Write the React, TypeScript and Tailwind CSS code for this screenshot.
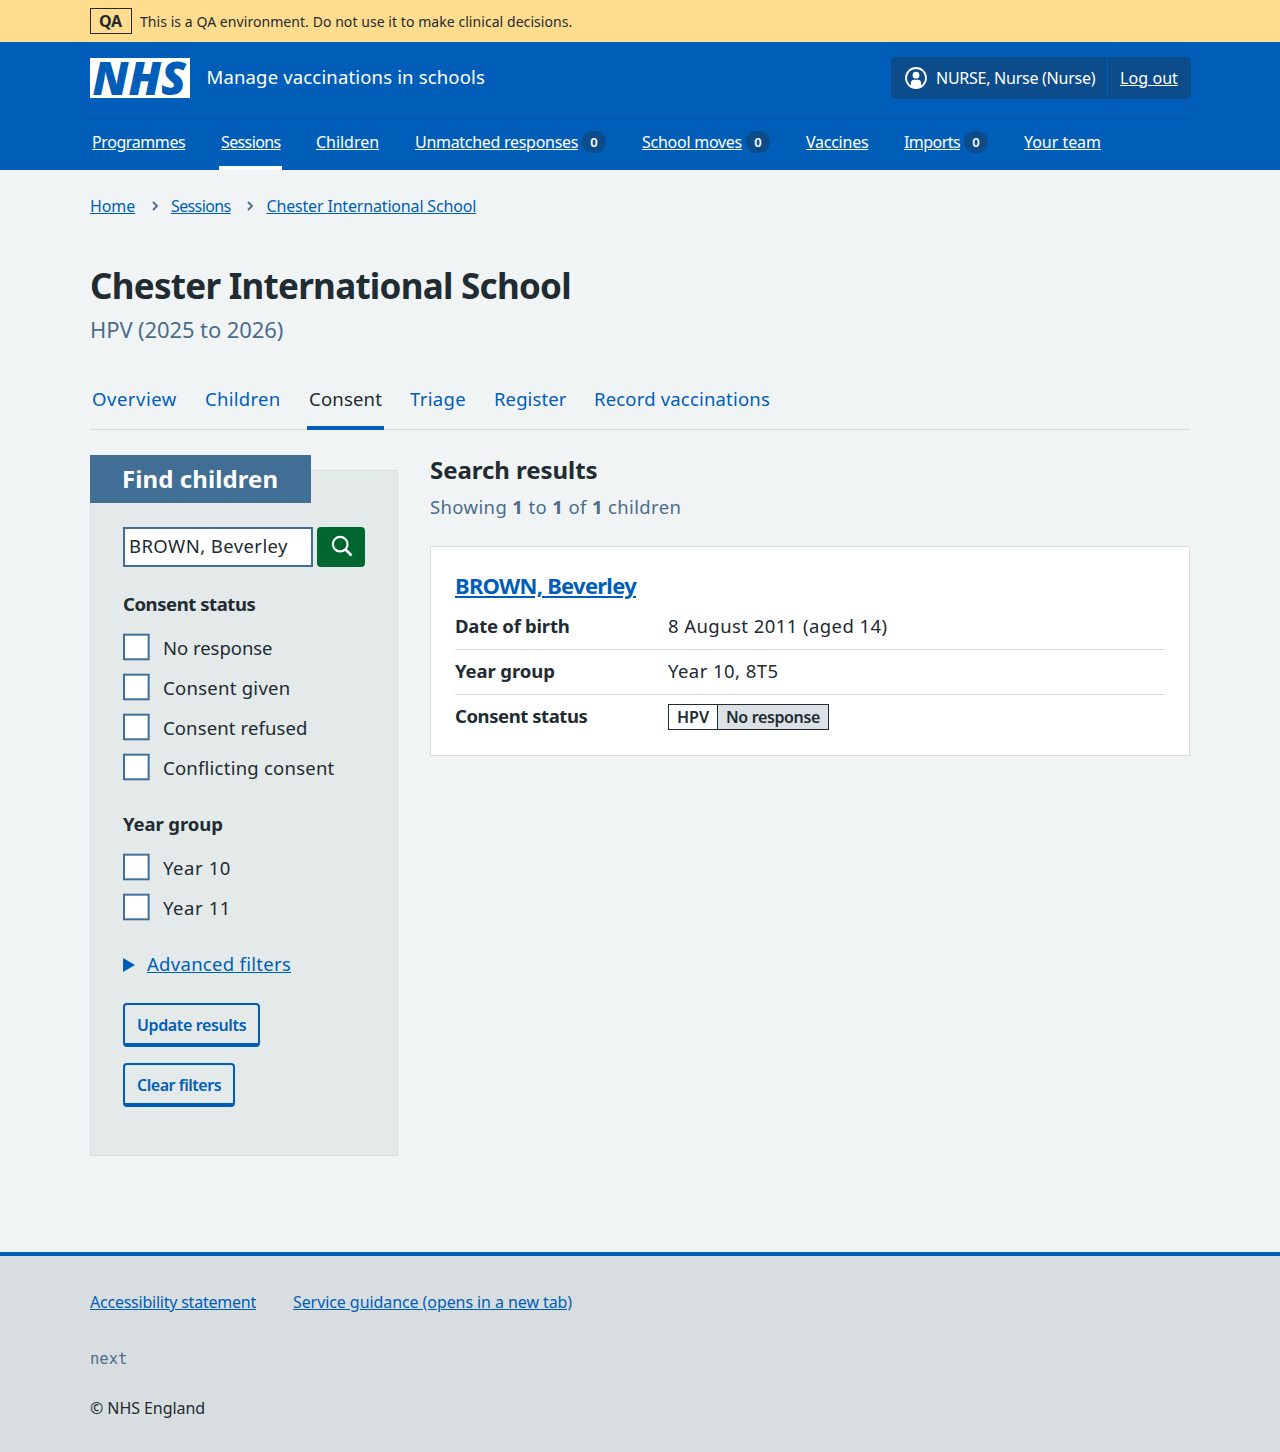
import type { ReactNode } from 'react';

type NavItem = { label: string; tracking: string; width: string; count?: number; current?: boolean };

const NAV: NavItem[] = [
  { label: 'Programmes', tracking: 'tracking-[-0.41px]', width: 'w-[97px]' },
  { label: 'Sessions', tracking: 'tracking-[-0.62px]', width: 'w-[63px]', current: true },
  { label: 'Children', tracking: 'tracking-[-0.04px]', width: 'w-[67px]' },
  { label: 'Unmatched responses', tracking: 'tracking-[-0.29px]', width: 'w-[195px]', count: 0 },
  { label: 'School moves', tracking: 'tracking-[-0.26px]', width: 'w-[132px]', count: 0 },
  { label: 'Vaccines', tracking: 'tracking-[-0.25px]', width: 'w-[66px]' },
  { label: 'Imports', tracking: 'tracking-[-0.56px]', width: 'w-[88px]', count: 0 },
  { label: 'Your team', tracking: 'tracking-[-0.04px]', width: 'w-[81px]' },
];

const TABS = [
  { label: 'Overview', tracking: 'tracking-[0.53px]', width: 'w-[89px]' },
  { label: 'Children', tracking: 'tracking-[0.29px]', width: 'w-[80px]' },
  { label: 'Consent', tracking: 'tracking-[0.19px]', width: 'w-[77px]', current: true },
  { label: 'Triage', tracking: 'tracking-[0.34px]', width: 'w-[60px]' },
  { label: 'Register', tracking: 'tracking-[0.1px]', width: 'w-[76px]' },
  { label: 'Record vaccinations', tracking: 'tracking-[0.18px]', width: 'w-[180px]' },
];

const CONSENT_OPTIONS = [
  { label: 'No response', tracking: 'tracking-[-0.04px]' },
  { label: 'Consent given', tracking: 'tracking-[0.27px]' },
  { label: 'Consent refused', tracking: 'tracking-[0.12px]' },
  { label: 'Conflicting consent', tracking: 'tracking-[0.23px]' },
];

const YEAR_OPTIONS = [
  { label: 'Year 10', tracking: 'tracking-[0.57px]' },
  { label: 'Year 11', tracking: 'tracking-[0.57px]' },
];

function Container({ children, className = '' }: { children: ReactNode; className?: string }) {
  return <div className={`mx-auto w-[1100px] ${className}`}>{children}</div>;
}

function Checkbox({ label, tracking }: { label: string; tracking: string }) {
  return (
    <label className="flex h-10 items-center">
      <span className="size-10 shrink-0 origin-left scale-[0.6667] border-3 border-[#406e95] bg-white" />
      <span className={`pt-px text-[18.5px] leading-6 ${tracking}`}>{label}</span>
    </label>
  );
}

function Chevron() {
  return (
    <svg className="h-[10px] w-[7px]" viewBox="0 0 7 10" fill="none" stroke="#4c6c8a" strokeWidth="1.8">
      <path d="M1 1 L5 5 L1 9" />
    </svg>
  );
}

function SummaryRow({ term, tracking, last, children }: { term: string; tracking: string; last?: boolean; children: ReactNode }) {
  return (
    <div className={`flex h-[45px] items-start pt-[9px] ${last ? '' : 'border-b border-[#d8dde0]'}`}>
      <dt className={`w-[213px] text-[18.5px] leading-6 font-bold ${tracking}`}>{term}</dt>
      <dd className="flex">{children}</dd>
    </div>
  );
}

export default function App() {
  return (
    <div className="flex h-[1452px] flex-col bg-[#f0f4f5] font-['Noto_Sans',sans-serif] text-[#212b32]">
      <div className="bg-[#ffdc8e]">
        <Container className="flex h-[42px] items-center">
          <strong className="flex h-[26px] w-[42px] items-center justify-center border border-[#212b32] pr-px text-[16px] leading-6 font-bold tracking-[-0.2px]">
            QA
          </strong>
          <span className="ml-2 pt-px text-[14px] leading-5 tracking-[0.06px]">
            This is a QA environment. Do not use it to make clinical decisions.
          </span>
        </Container>
      </div>

      <header className="bg-[#005eb8] text-white">
        <Container>
          <div className="flex h-[71px] items-center">
            <svg className="h-10 w-[100px] overflow-visible bg-white" viewBox="0 0 100 40" role="img" aria-label="NHS">
              <text
                x="2.5"
                y="36.5"
                fontFamily="Noto Sans"
                fontSize="46"
                fontWeight="900"
                fontStyle="italic"
                textLength="93.5"
                lengthAdjust="spacingAndGlyphs"
                fill="#005eb8"
              >
                NHS
              </text>
            </svg>
            <span className="-mt-0.5 ml-[16.5px] text-[18.5px] leading-6 tracking-[0.16px]">Manage vaccinations in schools</span>
            <div className="-mr-px ml-auto flex h-[42px] w-[300px] items-stretch rounded bg-[#0c4c8a] text-[16px]">
              <span className="flex w-[217px] items-center border-r border-[#005eb8] pl-[14px]">
                <svg className="size-[22px]" viewBox="0 0 22 22">
                  <circle cx="11" cy="11" r="10" fill="none" stroke="#fff" strokeWidth="1.8" />
                  <circle cx="11" cy="8.2" r="3.4" fill="#fff" />
                  <path d="M5.8 19 V16.5 C5.8 13.8 7.6 12.8 9 12.8 H13 C14.4 12.8 16.2 13.8 16.2 16.5 V19 L11 21 Z" fill="#fff" />
                </svg>
                <span className="ml-[9px] tracking-[-0.26px]">NURSE, Nurse (Nurse)</span>
              </span>
              <a className="ml-3 self-center tracking-[0.08px] underline underline-offset-1">Log out</a>
            </div>
          </div>
          <nav className="flex h-[57px] gap-8 border-t border-[#175fb7] text-[16px]">
            {NAV.map((item) => (
              <div
                key={item.label}
                className={`flex items-center border-b-4 pt-1 pl-[2px] ${item.width} ${item.current ? 'border-white' : 'border-transparent'}`}
              >
                <a className={`whitespace-nowrap underline underline-offset-1 ${item.tracking}`}>{item.label}</a>
                {item.count !== undefined && (
                  <span className="mr-[2px] ml-auto flex h-[22px] w-6 items-center justify-center rounded-full bg-[#0c4c8a] pt-px text-[13px] font-semibold">
                    {item.count}
                  </span>
                )}
              </div>
            ))}
          </nav>
        </Container>
      </header>

      <Container className="flex-1">
        <nav className="flex h-[72px] items-center text-[16px] text-[#005eb8]">
          <a className="w-[62px] tracking-[-0.1px]">
            <span className="underline underline-offset-1">Home</span>
          </a>
          <Chevron />
          <a className="ml-3 w-[76px] tracking-[-0.62px]">
            <span className="underline underline-offset-1">Sessions</span>
          </a>
          <Chevron />
          <a className="ml-[12.5px] tracking-[-0.17px] underline underline-offset-1">Chester International School</a>
        </nav>

        <h1 className="mt-[22px] text-[35px] leading-[44px] font-bold tracking-[-0.73px]">
          Chester International School
        </h1>
        <p className="mt-[5px] text-[22px] leading-8 tracking-[-0.11px] text-[#4c6c8a]">HPV (2025 to 2026)</p>

        <nav className="mt-[27px] flex h-[58px] gap-6 border-b border-[#d8dde0] text-[18.5px] text-[#005eb8]">
          {TABS.map((tab) => (
            <a
              key={tab.label}
              className={`-mb-px border-b-4 pt-[15px] pl-[2px] leading-6 whitespace-nowrap ${tab.width} ${tab.tracking} ${tab.current ? 'border-[#005eb8] text-[#212b32]' : 'border-transparent'}`}
            >
              {tab.label}
            </a>
          ))}
        </nav>

        <div className="mt-[25px] flex items-start gap-8">
          <aside className="mt-[15px] h-[686px] w-[308px] border border-[#d8dde0] bg-[#e4e9e9] pl-8">
            <h2 className="-mt-4 -ml-[33px] h-12 w-[221px] bg-[#406e95] pl-[32px] text-[24px] leading-[48px] font-bold tracking-[0.08px] text-white">
              Find children
            </h2>
            <div className="mt-6 flex gap-1">
              <div className="flex h-10 w-[190px] items-center border-2 border-[#406e95] bg-white pb-0.5 pl-1 text-[18.5px] leading-6 tracking-[0.42px] whitespace-nowrap">
                BROWN, Beverley
              </div>
              <button aria-label="Search" className="flex h-10 w-12 items-center justify-center rounded bg-[#00662f]">
                <svg className="-mt-[3px] ml-px size-[22px]" viewBox="0 0 22 22" fill="none" stroke="#fff" strokeWidth="2.2">
                  <circle cx="9.2" cy="9.2" r="7.3" />
                  <path d="M14.5 14.5 L20.5 20.5" strokeWidth="2.6" />
                </svg>
              </button>
            </div>
            <h3 className="mt-[25px] text-[18.5px] leading-6 font-bold tracking-[-0.43px]">Consent status</h3>
            <div className="mt-[11px]">
              {CONSENT_OPTIONS.map((option) => (
                <Checkbox key={option.label} {...option} />
              ))}
            </div>
            <h3 className="mt-[25px] text-[18.5px] leading-6 font-bold tracking-[-0.1px]">Year group</h3>
            <div className="mt-[11px]">
              {YEAR_OPTIONS.map((option) => (
                <Checkbox key={option.label} {...option} />
              ))}
            </div>
            <div className="mt-[25px] flex h-6 items-center text-[#005eb8]">
              <svg className="mt-0.5 h-[14px] w-3" viewBox="0 0 12 14" fill="#005eb8">
                <path d="M0 0 L12 7 L0 14 Z" />
              </svg>
              <a className="ml-3 text-[18.5px] leading-6 tracking-[0.29px] underline decoration-1 underline-offset-1">
                Advanced filters
              </a>
            </div>
            <div className="mt-[27px] flex flex-col items-start gap-4 text-[16px] font-semibold text-[#005eb8]">
              <button className="h-11 w-[137px] rounded border-2 border-b-4 border-[#005eb8] pt-0.5 pl-3 text-left tracking-[-0.37px]">
                Update results
              </button>
              <button className="h-11 w-[112px] rounded border-2 border-b-4 border-[#005eb8] pt-0.5 pl-3 text-left tracking-[-0.47px]">
                Clear filters
              </button>
            </div>
          </aside>

          <section className="w-[760px]">
            <h2 className="text-[24px] leading-[30px] font-bold tracking-[-0.05px]">Search results</h2>
            <p className="mt-[10px] text-[18.5px] leading-6 tracking-[0.37px] text-[#4c6c8a]">
              Showing <b className="font-bold">1</b> to <b className="font-bold">1</b> of{' '}
              <b className="font-bold">1</b> children
            </p>
            <div className="mt-[27px] h-[210px] border border-[#d8dde0] bg-white px-6 pt-[23px]">
              <h3 className="text-[22px] leading-[31px] font-bold tracking-[-0.74px] text-[#005eb8] underline decoration-2 underline-offset-2">
                BROWN, Beverley
              </h3>
              <dl className="mt-[4px]">
                <SummaryRow term="Date of birth" tracking="tracking-[-0.24px]">
                  <span className="text-[18.5px] leading-6 tracking-[0.43px]">8 August 2011 (aged 14)</span>
                </SummaryRow>
                <SummaryRow term="Year group" tracking="tracking-[-0.1px]">
                  <span className="text-[18.5px] leading-6 tracking-[0.44px]">Year 10, 8T5</span>
                </SummaryRow>
                <SummaryRow term="Consent status" tracking="tracking-[-0.43px]" last>
                  <span className="flex h-[26px] w-[161px] border border-[#212b32] text-[16px] leading-6 font-semibold">
                    <span className="w-[49px] border-r border-[#212b32] pl-2">HPV</span>
                    <span className="flex-1 bg-[#dbe1e4] pl-2 tracking-[-0.36px]">No response</span>
                  </span>
                </SummaryRow>
              </dl>
            </div>
          </section>
        </div>
      </Container>

      <footer className="h-[200px] border-t-4 border-[#005eb8] bg-[#d8dde0] text-[16px] leading-6">
        <Container className="pt-[34px]">
          <div className="flex text-[#005eb8]">
            <a className="tracking-[-0.23px] underline underline-offset-1">Accessibility statement</a>
            <a className="ml-[37px] tracking-[-0.08px] underline underline-offset-1">
              Service guidance (opens in a new tab)
            </a>
          </div>
          <p className="mt-[33px] font-['DejaVu_Sans_Mono',monospace] text-[15.5px] text-[#4c6c8a]">next</p>
          <p className="mt-[25px] tracking-[-0.07px]">© NHS England</p>
        </Container>
      </footer>
    </div>
  );
}
